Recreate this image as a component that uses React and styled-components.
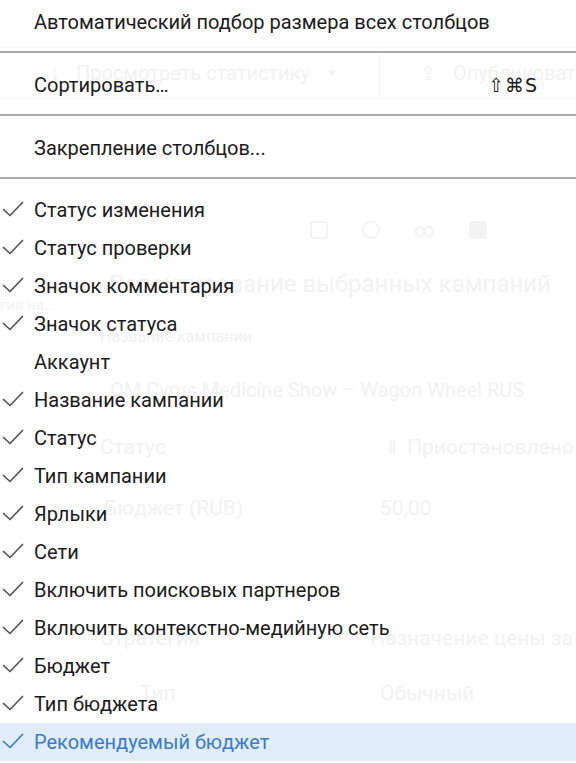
import React from "react";
import styled, { createGlobalStyle } from "styled-components";

const Global = createGlobalStyle`
  html, body { margin: 0; padding: 0; background: #fff; }
  body { font-family: Roboto, "Noto Sans", Arial, sans-serif; overflow: hidden; }
  * { box-sizing: border-box; }
`;

const Screen = styled.div`
  position: relative;
  width: 576px;
  height: 763px;
  overflow: hidden;
  background: #fff;
`;

/* ---------- faint page behind the menu ---------- */
const Backdrop = styled.div`
  display: flex;
  flex-direction: column;
  color: #f2f2f2;
  font-family: Roboto, Arial, sans-serif;
  padding-top: 47px;
`;

const GhostToolbar = styled.div`
  display: flex;
  align-items: center;
  height: 52px;
  border-top: 1px solid #f7f7f7;
  border-bottom: 1px solid #f7f7f7;
  font-size: 20px;
`;

const GhostCell = styled.div`
  display: flex;
  align-items: center;
  gap: 16px;
  height: 100%;
  padding-left: ${(p) => p.$pad}px;
  width: ${(p) => p.$w}px;
  border-right: ${(p) => (p.$divider ? "1px solid #f5f5f5" : "none")};
`;

const GhostIcons = styled.div`
  display: flex;
  align-items: center;
  gap: 34px;
  margin-top: 116px;
  padding-left: 310px;
  height: 30px;
  font-size: 20px;
`;

const GhostBox = styled.div`
  width: 18px;
  height: 18px;
  border: 2px solid #f3f3f3;
  border-radius: ${(p) => (p.$round ? "50%" : "3px")};
  background: ${(p) => (p.$fill ? "#f3f3f3" : "transparent")};
`;

const GhostHeading = styled.div`
  display: flex;
  justify-content: flex-end;
  font-size: 24px;
  line-height: 26px;
  padding: 26px 25px 0 0;
  white-space: nowrap;
`;

const GhostLine = styled.div`
  display: flex;
  font-size: ${(p) => p.$size}px;
  line-height: ${(p) => p.$lh}px;
  padding-top: ${(p) => p.$top}px;
  padding-left: ${(p) => p.$left}px;
  white-space: nowrap;
`;

const GhostCol = styled.span`
  width: ${(p) => p.$w}px;
  flex: none;
`;

/* ---------- menu ---------- */
const Menu = styled.div`
  position: absolute;
  inset: 0;
  display: flex;
  flex-direction: column;
  padding-top: 3px;
  font-family: Roboto, "Noto Sans", Arial, sans-serif;
  font-size: 20px;
  color: #1b1b1b;
`;

const Item = styled.div`
  display: flex;
  align-items: center;
  height: 38px;
  padding: 0 38px 0 34px;
  position: relative;
  background: ${(p) => (p.$active ? "rgba(224, 236, 251, 0.95)" : "transparent")};
  color: ${(p) => (p.$active ? "#3a7bd5" : "#1b1b1b")};
  white-space: nowrap;
`;

const Label = styled.span`
  flex: 1;
  margin-top: -1px;
`;

const Shortcut = styled.span`
  font-family: "DejaVu Sans", Roboto, sans-serif;
  font-size: 19px;
  letter-spacing: 1px;
  color: #1b1b1b;
  margin-top: -1px;
`;

const Check = styled.svg`
  position: absolute;
  left: 2px;
  top: 10px;
  width: 22px;
  height: 16px;
`;

const Separator = styled.div`
  height: 2px;
  background: #a9a9a9;
  margin: 10px 0 ${(p) => (p.$last ? 12 : 13)}px;
`;

function CheckMark({ color }) {
  return (
    <Check viewBox="0 0 22 16" fill="none">
      <path d="M1.5 8.5 L8 14.5 L20.5 1.5" stroke={color} strokeWidth="1.7" strokeLinecap="round" strokeLinejoin="round" />
    </Check>
  );
}

const checked = [
  ["Статус изменения", true],
  ["Статус проверки", true],
  ["Значок комментария", true],
  ["Значок статуса", true],
  ["Аккаунт", false],
  ["Название кампании", true],
  ["Статус", true],
  ["Тип кампании", true],
  ["Ярлыки", true],
  ["Сети", true],
  ["Включить поисковых партнеров", true],
  ["Включить контекстно-медийную сеть", true],
  ["Бюджет", true],
  ["Тип бюджета", true],
  ["Рекомендуемый бюджет", true, true],
];

export default function App() {
  return (
    <Screen>
      <Global />
      <Backdrop aria-hidden="true">
        <GhostToolbar>
          <GhostCell $pad={50} $w={380} $divider>
            <span>↓</span>
            <span>Просмотреть статистику</span>
            <span style={{ fontSize: 12 }}>▼</span>
          </GhostCell>
          <GhostCell $pad={40} $w={196}>
            <span>⇪</span>
            <span>Опубликовать</span>
          </GhostCell>
        </GhostToolbar>
        <GhostIcons>
          <GhostBox />
          <GhostBox $round />
          <span>∞</span>
          <GhostBox $fill />
        </GhostIcons>
        <GhostHeading>Редактирование выбранных кампаний</GhostHeading>
        <GhostLine $size={15} $lh={16} $top={0} $left={0}>гия на...</GhostLine>
        <GhostLine $size={16} $lh={19} $top={14} $left={100}>Название кампании</GhostLine>
        <GhostLine $size={20} $lh={25} $top={32} $left={110}>OM Cyrus Medicine Show – Wagon Wheel RUS</GhostLine>
        <GhostLine $size={21} $lh={25} $top={32} $left={100}>
          <GhostCol $w={288}>Статус</GhostCol>
          <span>‖&nbsp;&nbsp;Приостановлено</span>
        </GhostLine>
        <GhostLine $size={21} $lh={25} $top={36} $left={104}>
          <GhostCol $w={276}>Бюджет (RUB)</GhostCol>
          <span>50,00</span>
        </GhostLine>
        <GhostLine $size={21} $lh={25} $top={105} $left={100}>
          <GhostCol $w={270}>Стратегия</GhostCol>
          <span>Назначение цены за</span>
        </GhostLine>
        <GhostLine $size={21} $lh={25} $top={30} $left={140}>
          <GhostCol $w={240}>Тип</GhostCol>
          <span>Обычный</span>
        </GhostLine>
      </Backdrop>

      <Menu role="menu">
        <Item>
          <Label>Автоматический подбор размера всех столбцов</Label>
        </Item>
        <Separator />
        <Item>
          <Label>Сортировать…</Label>
          <Shortcut>⇧⌘S</Shortcut>
        </Item>
        <Separator />
        <Item>
          <Label>Закрепление столбцов...</Label>
        </Item>
        <Separator $last />
        {checked.map(([label, on, active]) => (
          <Item key={label} $active={active}>
            {on && <CheckMark color={active ? "#3a7bd5" : "#555"} />}
            <Label>{label}</Label>
          </Item>
        ))}
      </Menu>
    </Screen>
  );
}
